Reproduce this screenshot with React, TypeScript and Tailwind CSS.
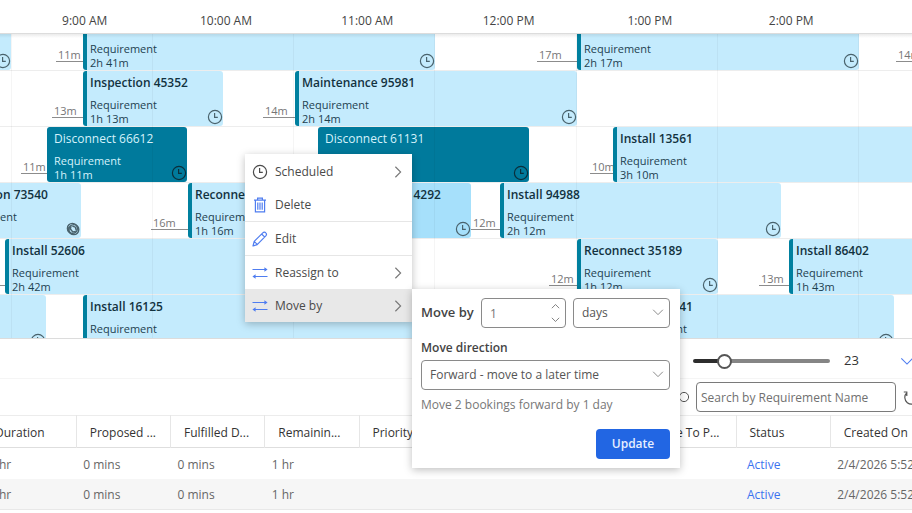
import { useState } from 'react'
import type { ReactNode } from 'react'

interface Booking {
  start: number
  end: number
  title: string
  duration?: string
  travel?: string
  travelWidth?: number
  kind?: 'selected' | 'overlap'
  conflict?: boolean
}

const hours = ['9:00 AM', '10:00 AM', '11:00 AM', '12:00 PM', '1:00 PM', '2:00 PM']

// start and end are offsets from the left edge of the visible window
const rows: Booking[][] = [
  [
    { start: -120, end: 11, title: 'Install 40118', duration: '1h 2m' },
    { start: 83, end: 435, title: 'Install 77120', duration: '2h 41m', travel: '11m', travelWidth: 27 },
    { start: 577, end: 859, title: 'Install 31904', duration: '2h 17m', travel: '17m', travelWidth: 40 },
    { start: 935, end: 1080, title: 'Install 90312', duration: '1h 5m', travel: '14m', travelWidth: 39 },
  ],
  [
    { start: 83, end: 223, title: 'Inspection 45352', duration: '1h 13m', travel: '13m', travelWidth: 31 },
    { start: 295, end: 577, title: 'Maintenance 95981', duration: '2h 14m', travel: '14m', travelWidth: 32 },
  ],
  [
    { start: 47, end: 187, title: 'Disconnect 66612', duration: '1h 11m', travel: '11m', travelWidth: 26, kind: 'selected' },
    { start: 318, end: 529, title: 'Disconnect 61131', duration: '1h 40m', kind: 'selected' },
    { start: 613, end: 1000, title: 'Install 13561', duration: '3h 10m', travel: '10m', travelWidth: 23 },
  ],
  [
    { start: -57, end: 81, title: 'Inspection 73540', duration: '1h 11m', conflict: true },
    { start: 188, end: 336, title: 'Reconnect 20518', duration: '1h 16m', travel: '16m', travelWidth: 37 },
    { start: 336, end: 471, title: 'Inspection 14292', duration: '1h 12m', kind: 'overlap' },
    { start: 500, end: 781, title: 'Install 94988', duration: '2h 12m', travel: '12m', travelWidth: 29 },
  ],
  [
    { start: 5, end: 388, title: 'Install 52606', duration: '2h 42m', travel: '15m', travelWidth: 32 },
    { start: 577, end: 718, title: 'Reconnect 35189', duration: '1h 12m', travel: '12m', travelWidth: 28 },
    { start: 789, end: 1000, title: 'Install 86402', duration: '1h 43m', travel: '13m', travelWidth: 30 },
  ],
  [
    { start: -96, end: 46, title: 'Install 66031', duration: '1h 9m' },
    { start: 83, end: 470, title: 'Install 16125', duration: '2h 50m' },
    { start: 613, end: 894, title: 'Install 25841', duration: '2h 8m' },
  ],
]

const columns = ['Duration', 'Proposed ...', 'Fulfilled D...', 'Remainin...', 'Priority', 'Territory', 'From Date', 'Time To P...', 'Status', 'Created On']

const requirements = [
  ['1 hr', '0 mins', '0 mins', '1 hr', '', '', '', '', 'Active', '2/4/2026 5:52'],
  ['1 hr', '0 mins', '0 mins', '1 hr', '', '', '', '', 'Active', '2/4/2026 5:52'],
]

function ClockIcon({ className = 'size-4' }: { className?: string }) {
  return (
    <svg viewBox="0 0 16 16" className={className} fill="none" stroke="currentColor" strokeWidth="1.2">
      <circle cx="8" cy="8" r="6.6" />
      <path d="M7.6 4v4.4h3.2" />
    </svg>
  )
}

function ConflictIcon() {
  return (
    <svg viewBox="0 0 16 16" className="size-4" fill="none" stroke="currentColor" strokeWidth="1.4">
      <circle cx="7.4" cy="7.4" r="5" />
      <circle cx="8.8" cy="8.6" r="5" />
      <path d="M6 5.2L5.4 8l2.4 3 3-.6M7.4 5l3 1.2.8 3M4 6l-.4 4 3 3" />
    </svg>
  )
}

function TrashIcon() {
  return (
    <svg viewBox="0 0 16 16" className="size-4" fill="none" stroke="#4f7df0" strokeWidth="1.2">
      <path d="M2 3.2h12M5.6 3V1.2h4.8V3M3.4 3.4v11.4h9.2V3.4" />
      <path d="M5.8 5.4v7.4M8 5.4v7.4M10.2 5.4v7.4" />
    </svg>
  )
}

function PencilIcon() {
  return (
    <svg viewBox="0 0 16 16" className="size-4" fill="none" stroke="#4f7df0" strokeWidth="1.2" strokeLinejoin="round">
      <path d="M1 15l1.2-4.6 8.6-8.6c1-1 2.2-.9 3 0 .9.9.9 2 0 3l-8.6 8.8L1 15zM9.6 3l3.2 3.2M2.4 10.6l2.8 2.8" />
    </svg>
  )
}

function SwapIcon() {
  return (
    <svg viewBox="0 0 16 16" className="size-4" fill="none" stroke="#4f7df0" strokeWidth="1.2">
      <path d="M.5 4.5H15M1 11.5h14.5" />
      <path d="M12.4 2.2l3.2 2.3-3.2 2.3zM3.6 9.2L.4 11.5l3.2 2.3z" fill="#4f7df0" stroke="none" />
    </svg>
  )
}

function Chevron({ dir, className = '' }: { dir: 'right' | 'down' | 'up'; className?: string }) {
  const paths = { right: 'M5 2l6 6-6 6', down: 'M1.5 5L8 11.5 14.5 5', up: 'M1.5 11L8 4.5l6.5 6.5' }
  return (
    <svg viewBox="0 0 16 16" className={className} fill="none" stroke="currentColor" strokeWidth="1.3">
      <path d={paths[dir]} />
    </svg>
  )
}

function BookingCard({ booking }: { booking: Booking }) {
  const selected = booking.kind === 'selected'
  const look = selected
    ? 'bg-[#007a9c] border-[#007a9c] text-[#d5f2fb]'
    : booking.kind === 'overlap'
      ? 'bg-[#a6e0fb] border-[#00809f] text-[#1d4150]'
      : 'bg-[#c4ebfd] border-[#00809f] text-[#1d4150]'
  return (
    <div
      className={`relative h-[55px] shrink-0 overflow-hidden rounded-[3px] border-l-4 pl-[3px] whitespace-nowrap ${look}`}
      style={{ width: booking.end - booking.start }}
    >
      <div className={`text-[12px] leading-[24px] ${selected ? '' : 'font-semibold text-[#12323f]'}`}>{booking.title}</div>
      <div className="pt-[3px] text-[11px] leading-[14px]">Requirement</div>
      <div className="text-[11px] leading-[14px]">{booking.duration}</div>
      <span className={`absolute right-0 bottom-px ${selected ? 'text-[#0a2f3c]' : 'text-[#4a636d]'}`}>
        {booking.conflict ? <ConflictIcon /> : <ClockIcon />}
      </span>
    </div>
  )
}

function TimelineRow({ bookings }: { bookings: Booking[] }) {
  return (
    <div className="flex h-14 shrink-0 border-b border-[#ededed]">
      {bookings.map((b, i) => {
        const prev = i === 0 ? 0 : bookings[i - 1].end
        const travelWidth = b.travelWidth ?? 0
        return (
          <div key={b.title} className="flex shrink-0" style={{ marginLeft: b.start - travelWidth - prev }}>
            {b.travel && (
              <div
                className="h-[47px] shrink-0 border-b border-[#8c8c8c] pt-8 pl-0.5 text-[11px] leading-[16px] text-[#767676]"
                style={{ width: travelWidth }}
              >
                {b.travel}
              </div>
            )}
            <BookingCard booking={b} />
          </div>
        )
      })}
    </div>
  )
}

function MenuItem({ icon, label, submenu, active }: { icon: ReactNode; label: string; submenu?: boolean; active?: boolean }) {
  return (
    <button
      type="button"
      role="menuitem"
      className={`flex h-[33px] w-full items-center px-[7px] text-[12px] text-[#4a4a4a] ${active ? 'bg-[#e8e8e8]' : 'bg-white'}`}
    >
      <span className="mr-[7px]">{icon}</span>
      <span className="flex-1 text-left">{label}</span>
      {submenu && <Chevron dir="right" className="size-3.5 text-[#777]" />}
    </button>
  )
}

function ContextMenu() {
  return (
    <div role="menu" className="absolute top-[154px] left-[245px] z-10 w-[167px] bg-white pt-px shadow-[0_2px_8px_rgba(0,0,0,0.25)]">
      <MenuItem icon={<ClockIcon />} label="Scheduled" submenu />
      <MenuItem icon={<TrashIcon />} label="Delete" />
      <div className="h-px bg-[#e6e6e6]" />
      <MenuItem icon={<PencilIcon />} label="Edit" />
      <div className="h-px bg-[#e6e6e6]" />
      <MenuItem icon={<SwapIcon />} label="Reassign to" submenu />
      <MenuItem icon={<SwapIcon />} label="Move by" submenu active />
    </div>
  )
}

function MovePanel() {
  const [amount, setAmount] = useState(1)
  return (
    <form
      onSubmit={e => e.preventDefault()}
      className="absolute top-[289px] left-[412px] z-20 w-[268px] bg-white py-[9px] pr-[10px] pl-[9px] text-[12px] text-[#444] shadow-[0_2px_8px_rgba(0,0,0,0.25)]"
    >
      <div className="flex items-center">
        <label htmlFor="amount" className="flex-1 text-[13px] font-semibold">Move by</label>
        <div className="relative mr-[7px] w-[85px]">
          <input
            id="amount"
            type="number"
            value={amount}
            onChange={e => setAmount(Number(e.target.value))}
            className="block h-[30px] w-full appearance-none rounded-sm border border-[#8a8a8a] px-2 text-[#777] [appearance:textfield] [&::-webkit-inner-spin-button]:appearance-none"
          />
          <div className="absolute top-1 right-1.5 flex h-[22px] flex-col justify-between text-[#555]">
            <button type="button" aria-label="Increase" onClick={() => setAmount(amount + 1)}>
              <Chevron dir="up" className="size-[9px]" />
            </button>
            <button type="button" aria-label="Decrease" onClick={() => setAmount(amount - 1)}>
              <Chevron dir="down" className="size-[9px]" />
            </button>
          </div>
        </div>
        <div className="relative w-[97px]">
          <select aria-label="Unit" className="block h-[30px] w-full appearance-none rounded-sm border border-[#8a8a8a] bg-white px-2 text-[#555]">
            <option>days</option>
            <option>weeks</option>
          </select>
          <Chevron dir="down" className="pointer-events-none absolute top-2 right-1.5 size-3 text-[#888]" />
        </div>
      </div>
      <label htmlFor="direction" className="mt-[11px] block text-[12px] leading-[18px] font-semibold">Move direction</label>
      <div className="relative mt-[3px]">
        <select id="direction" className="block h-[30px] w-full appearance-none rounded-sm border border-[#8a8a8a] bg-white px-2 text-[#555]">
          <option>Forward - move to a later time</option>
          <option>Backward - move to an earlier time</option>
        </select>
        <Chevron dir="down" className="pointer-events-none absolute top-2 right-1.5 size-3 text-[#888]" />
      </div>
      <p className="mt-[6px] leading-[18px] text-[#777]">Move 2 bookings forward by 1 day</p>
      <div className="mt-[15px] flex justify-end">
        <button type="submit" className="h-[30px] w-[74px] rounded-sm bg-[#2266e3] font-semibold text-[#e6eeff]">
          Update
        </button>
      </div>
    </form>
  )
}

function Timeline() {
  return (
    <section>
      <div className="grid h-[33px] grid-cols-[11px_repeat(6,141fr)_53fr] items-end bg-white pb-[3px] text-[12px] leading-[18px] text-[#444]">
        <span />
        {hours.map(h => (
          <span key={h} className="pl-1.5 text-center">{h}</span>
        ))}
      </div>
      <div className="relative flex h-[306px] flex-col justify-end overflow-hidden border-t border-b border-[#dcdcdc] bg-white">
        <div className="-mb-[13px] flex flex-col">
          {rows.map((bookings, i) => (
            <TimelineRow key={i} bookings={bookings} />
          ))}
        </div>
        <div className="pointer-events-none absolute inset-0 grid grid-cols-[12px_repeat(6,141fr)_53fr]">
          {Array.from({ length: 7 }, (_, i) => (
            <span key={i} className="border-r border-black/4" />
          ))}
        </div>
        <div className="pointer-events-none absolute inset-x-0 top-0 h-1 bg-gradient-to-b from-black/8 to-transparent" />
      </div>
    </section>
  )
}

function Toolbar() {
  const [zoom, setZoom] = useState(23)
  return (
    <div>
      <div className="flex h-[40px] items-center justify-end border-b border-[#f5f5f5] pt-[5px] text-[13px] text-[#333]">
        <input
          type="range"
          aria-label="Row height"
          min={10}
          max={75}
          value={zoom}
          onChange={e => setZoom(Number(e.target.value))}
          className="h-1 w-[137px] appearance-none rounded-full bg-[linear-gradient(to_right,#2d2d2d_24%,#858585_24%)] [&::-webkit-slider-thumb]:size-[15px] [&::-webkit-slider-thumb]:appearance-none [&::-webkit-slider-thumb]:rounded-full [&::-webkit-slider-thumb]:border-2 [&::-webkit-slider-thumb]:border-[#555] [&::-webkit-slider-thumb]:bg-white"
        />
        <span className="w-[70px] pl-[14px]">{zoom}</span>
        <button type="button" aria-label="Collapse" className="-mr-0.5 text-[#4f7df0]">
          <Chevron dir="down" className="size-[14px]" />
        </button>
      </div>
      <div className="flex h-[36px] items-center justify-end">
        <svg viewBox="0 0 12 12" className="mr-[6px] size-3" fill="none" stroke="#555" strokeWidth="1">
          <circle cx="6" cy="6" r="4.6" />
        </svg>
        <input
          type="search"
          aria-label="Search by Requirement Name"
          placeholder="Search by Requirement Name"
          className="h-[30px] w-[200px] rounded-sm border border-[#7a7a7a] px-1 text-[12px] placeholder:text-[#707070]"
        />
        <button type="button" aria-label="Refresh" className="-mr-2 ml-[7px] text-[#555]">
          <svg viewBox="0 0 17 17" className="size-[17px]" fill="none" stroke="currentColor" strokeWidth="1.2">
            <path d="M11.8 2.4a6.8 6.8 0 1 1-8 1.2M3.8 7V3H.8" />
          </svg>
        </button>
      </div>
    </div>
  )
}

function RequirementsTable() {
  return (
    <table className="-ml-[18px] w-[calc(100%+31px)] table-fixed border-collapse text-left text-[12px] whitespace-nowrap">
      <thead>
        <tr className="h-[32px] border-t border-b border-t-[#ececec] border-b-[#dedede] text-[#333]">
          {columns.map(c => (
            <th key={c} className="border-r border-[#e6e6e6] pt-0.5 pl-[13px] font-normal">{c}</th>
          ))}
        </tr>
      </thead>
      <tbody>
        {requirements.map((cells, i) => (
          <tr key={i} className="h-[31px] text-[#666] even:border-b even:border-[#e8e8e8] even:bg-[#f6f6f6]">
            {cells.map((cell, j) => (
              <td key={j} className="pt-[3px] pl-[7px]">
                {cell === 'Active' ? <a href="#active" className="pl-1 text-[#3b73f0]">{cell}</a> : cell}
              </td>
            ))}
          </tr>
        ))}
      </tbody>
    </table>
  )
}

export default function App() {
  return (
    <main className="relative min-h-screen overflow-hidden bg-white font-['Segoe_UI','Open_Sans','Noto_Sans',sans-serif]">
      <Timeline />
      <Toolbar />
      <RequirementsTable />
      <ContextMenu />
      <MovePanel />
    </main>
  )
}
